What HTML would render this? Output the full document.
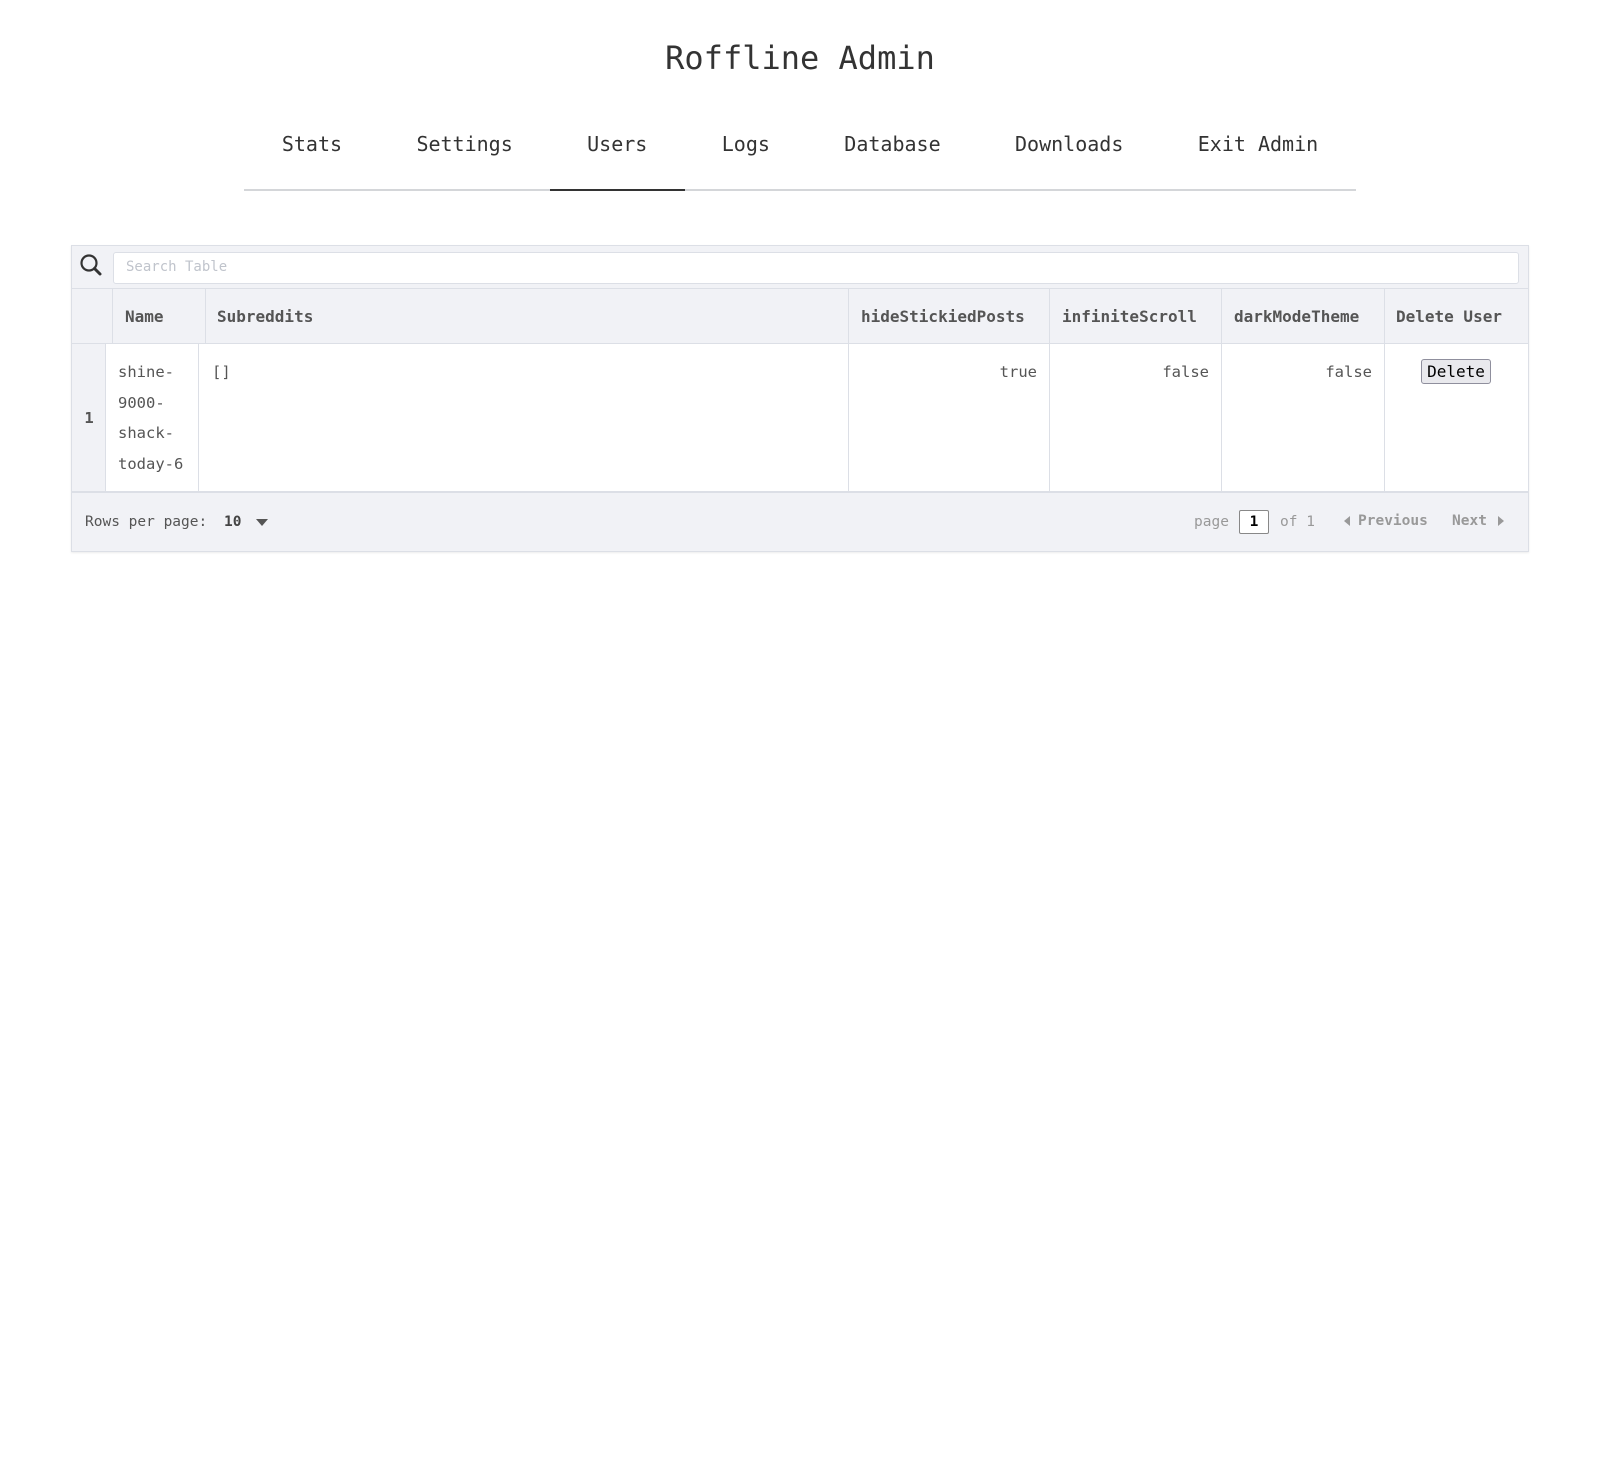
<!DOCTYPE html>
<html><head><meta charset="utf-8"><style>
*{box-sizing:border-box;margin:0;padding:0}
body{width:1600px;height:1480px;background:#fff;font-family:"DejaVu Sans Mono","Liberation Mono",monospace;color:#555;position:relative;overflow:hidden}
.a{position:absolute;white-space:nowrap}
h1{position:absolute;left:0;width:1600px;top:36px;text-align:center;font-weight:normal;font-size:32px;color:#333;line-height:44px}
.navline{position:absolute;left:244px;width:1112px;top:189px;height:2px;background:#d4d6d9}
.nav{position:absolute;left:0;width:1600px;top:126px;height:65px;display:flex;justify-content:center}
.nav div{flex-shrink:0;white-space:nowrap;padding:0 37.2px;font-size:20px;color:#333;line-height:36px;height:65px;position:relative}
.nav .act:after{content:"";position:absolute;left:0;right:0;bottom:0;height:2px;background:#333}
.tbl{position:absolute;left:71px;top:245px;width:1458px;height:307px;border:1px solid #dcdfe6;background:#f1f2f6;box-shadow:0 1px 2px rgba(0,0,0,.08)}
.inp{position:absolute;left:41px;top:6px;width:1406px;height:32px;background:#fff;border:1px solid #dcdfe6;border-radius:3px;font-size:14px;color:#c0c4cc;padding-left:12px;line-height:29px}
.hd{position:absolute;left:0;top:42px;width:1456px;height:56px;border-top:1px solid #dcdfe6;border-bottom:1px solid #dcdfe6}
.v{position:absolute;width:1px;background:#dcdfe6}
.bd{position:absolute;left:0;top:98px;width:1456px;height:147px;}
.th{position:absolute;top:1px;line-height:54px;font-weight:bold;font-size:16px;color:#555}
.td{position:absolute;font-size:15.5px;color:#555;line-height:30.5px}
.ft{position:absolute;left:0;top:245px;width:1456px;height:60px;border-top:2px solid #dcdfe6}
</style></head><body>
<h1>Roffline Admin</h1>
<div class="navline"></div>
<div class="nav"><div>Stats</div><div>Settings</div><div class="act">Users</div><div>Logs</div><div>Database</div><div>Downloads</div><div>Exit Admin</div></div>
<div class="tbl">
<svg class="a" style="left:5px;top:5px" width="30" height="30" viewBox="0 0 30 30"><circle cx="12" cy="12" r="7.5" fill="none" stroke="#333" stroke-width="2.2"/><line x1="17.5" y1="17.5" x2="23" y2="23" stroke="#333" stroke-width="3" stroke-linecap="round"/></svg>
<div class="inp">Search Table</div>
<div class="hd">
<div class="v" style="left:40px;top:0;height:54px"></div>
<div class="v" style="left:133px;top:0;height:54px"></div>
<div class="v" style="left:776px;top:0;height:54px"></div>
<div class="v" style="left:977px;top:0;height:54px"></div>
<div class="v" style="left:1149px;top:0;height:54px"></div>
<div class="v" style="left:1312px;top:0;height:54px"></div>
<div class="th" style="left:53px">Name</div>
<div class="th" style="left:145px">Subreddits</div>
<div class="th" style="left:789px">hideStickiedPosts</div>
<div class="th" style="left:990px">infiniteScroll</div>
<div class="th" style="left:1162px">darkModeTheme</div>
<div class="th" style="left:1324px">Delete User</div>
</div>
<div class="bd">
<div class="a" style="left:0;top:0;width:34px;height:147px;background:#f1f2f6;border-right:1px solid #dcdfe6"></div>
<div class="a" style="left:34px;top:0;width:1422px;height:147px;background:#fff"></div>
<div class="v" style="left:126px;top:0;height:147px"></div>
<div class="v" style="left:776px;top:0;height:147px"></div>
<div class="v" style="left:977px;top:0;height:147px"></div>
<div class="v" style="left:1149px;top:0;height:147px"></div>
<div class="v" style="left:1312px;top:0;height:147px"></div>
<div class="td" style="left:0;width:34px;text-align:center;top:59px;font-weight:bold">1</div>
<div class="td" style="left:46px;top:13px">shine-<br>9000-<br>shack-<br>today-6</div>
<div class="td" style="left:140px;top:13px">[]</div>
<div class="td" style="left:776px;width:189px;text-align:right;top:13px">true</div>
<div class="td" style="left:977px;width:160px;text-align:right;top:13px">false</div>
<div class="td" style="left:1149px;width:151px;text-align:right;top:13px">false</div>
<div class="a" style="left:1349px;top:15px;width:70px;height:25px;background:#e9e9ed;border:1px solid #8f8f9d;border-radius:3px;font-size:16px;color:#000;text-align:center;line-height:23px">Delete</div>
</div>
<div class="ft">
<div class="a" style="left:13px;top:21px;font-size:14.5px;color:#555">Rows per page:</div>
<div class="a" style="left:152px;top:21px;font-size:14.5px;font-weight:bold;color:#444">10</div>
<svg class="a" style="left:184px;top:26px" width="12" height="7"><path d="M0 0H12L6 7Z" fill="#555"/></svg>
<div class="a" style="left:1122px;top:21px;font-size:14.5px;color:#999">page</div>
<div class="a" style="left:1167px;top:17px;width:30px;height:24px;border:1px solid #888;background:#fff;border-radius:2px;font-size:14.5px;font-weight:bold;color:#000;text-align:center;line-height:22px">1</div>
<div class="a" style="left:1208px;top:21px;font-size:14.5px;color:#999">of 1</div>
<svg class="a" style="left:1272px;top:23px" width="6" height="10"><path d="M6 0V10L0 5Z" fill="#999"/></svg>
<div class="a" style="left:1286px;top:20px;font-size:14.5px;font-weight:bold;color:#999">Previous</div>
<div class="a" style="left:1380px;top:20px;font-size:14.5px;font-weight:bold;color:#999">Next</div>
<svg class="a" style="left:1426px;top:23px" width="6" height="10"><path d="M0 0V10L6 5Z" fill="#999"/></svg>
</div>
</div>
</body></html>
